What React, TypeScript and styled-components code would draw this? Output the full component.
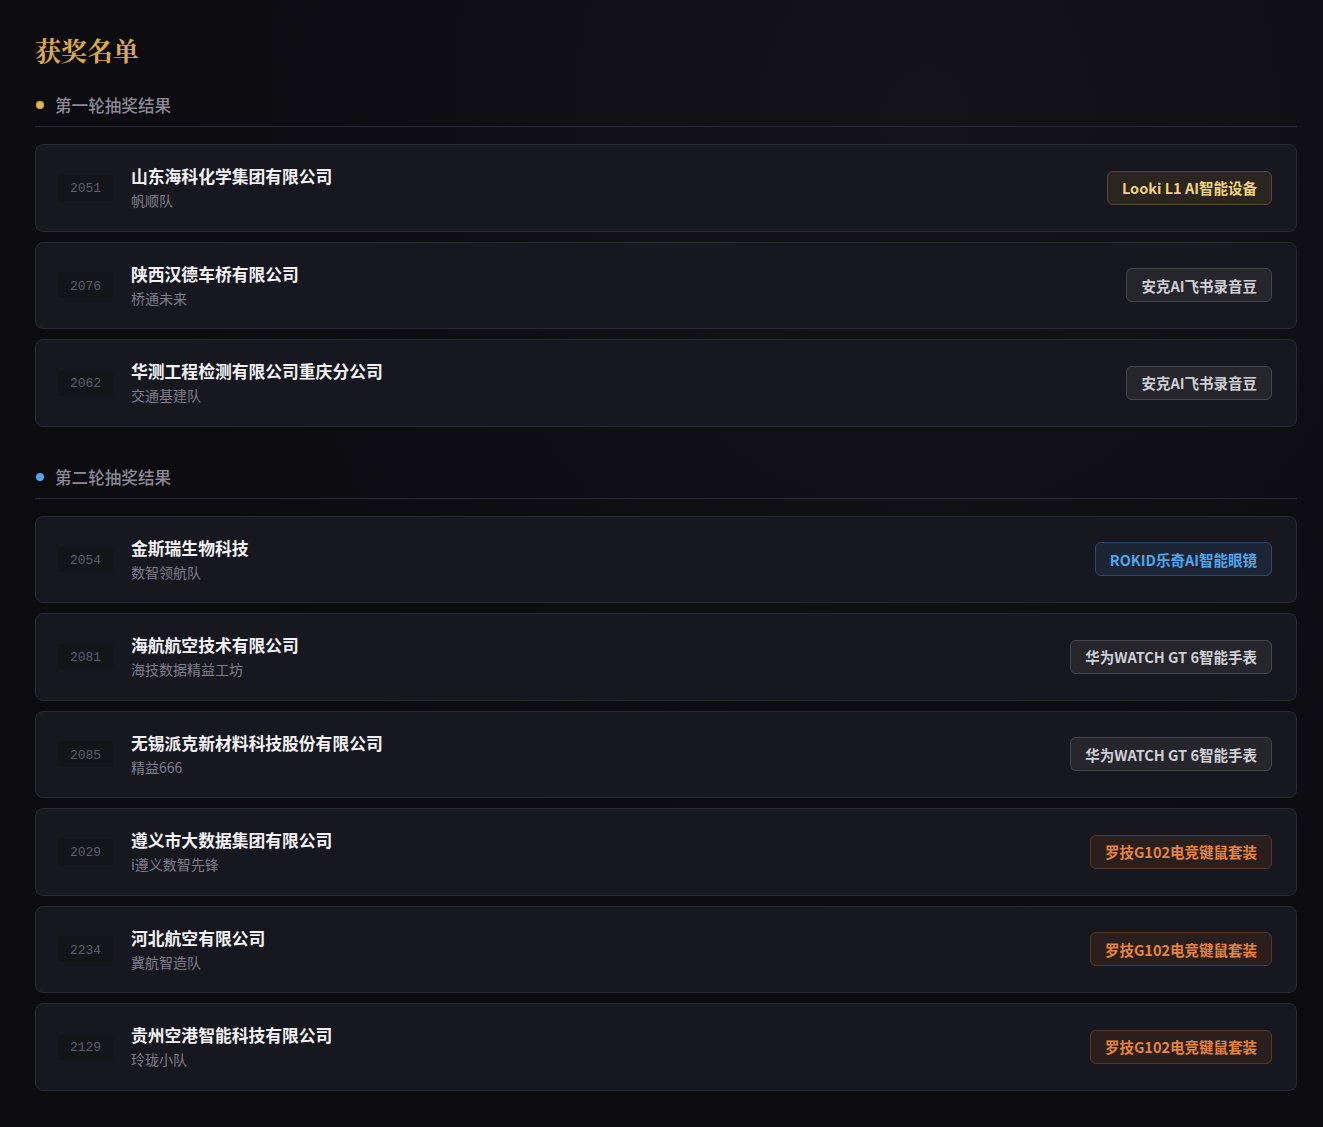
import styled, { createGlobalStyle } from "styled-components";

const GlobalStyle = createGlobalStyle`
  html, body {
    margin: 0;
    padding: 0;
    background: #0c0b10;
  }
  body {
    font-family: "Noto Sans CJK SC", "Noto Sans", sans-serif;
    color: #e8e8ee;
  }
`;

type Tone = "gold" | "grey" | "blue" | "orange";

const tones: Record<Tone, { fg: string; bg: string; border: string }> = {
  gold: { fg: "#f3d27c", bg: "#2b251f", border: "#5b4b31" },
  grey: { fg: "#cfcfd6", bg: "#25252b", border: "#45454d" },
  blue: { fg: "#4ea6ee", bg: "#1b2536", border: "#2e4866" },
  orange: { fg: "#e7843c", bg: "#2a1f1c", border: "#573827" },
};

const Page = styled.div`
  min-height: 1127px;
  box-sizing: border-box;
  padding: 28px 26px 36px 35px;
  background: radial-gradient(ellipse at 70% 10%, #141319 0%, #0c0b10 60%);
`;

const Title = styled.h1`
  margin: 0 0 21px;
  font-family: "Noto Serif CJK SC", "Liberation Serif", serif;
  font-size: 26px;
  font-weight: 700;
  line-height: 44px;
  color: #d9a94c;
`;

const Section = styled.section`
  margin-bottom: 38px;
`;

const SectionHead = styled.div`
  display: flex;
  align-items: center;
  gap: 11px;
  padding: 0 0 9px 0;
  border-bottom: 1px solid #2a2935;
  margin-bottom: 17px;
`;

const Dot = styled.span<{ $color: string }>`
  width: 8px;
  height: 8px;
  border-radius: 50%;
  margin-left: 1px;
  background: ${(p) => p.$color};
`;

const SectionTitle = styled.h2`
  margin: 0;
  font-size: 16.6px;
  font-weight: 500;
  line-height: 24px;
  color: #8b8a96;
`;

const List = styled.div`
  display: flex;
  flex-direction: column;
  gap: 10px;
`;

const Card = styled.div`
  display: flex;
  align-items: center;
  height: 87.5px;
  box-sizing: border-box;
  padding: 0 24px 0 22px;
  background: #17171f;
  border: 1px solid #2a2a35;
  border-radius: 8px;
`;

const Num = styled.div`
  width: 55px;
  height: 26px;
  padding-top: 2px;
  box-sizing: border-box;
  display: flex;
  align-items: center;
  justify-content: center;
  border-radius: 4px;
  background: #14141b;
  color: #5d5d6a;
  font-family: "Liberation Mono", monospace;
  font-size: 13px;
  margin-right: 18px;
`;

const Info = styled.div`
  flex: 1;
  display: flex;
  flex-direction: column;
  gap: 3px;
`;

const Company = styled.div`
  font-size: 16.8px;
  font-weight: 700;
  line-height: 22px;
  color: #f2f2f6;
`;

const Team = styled.div`
  font-size: 14px;
  line-height: 20px;
  color: #7f7e8a;
`;

const Prize = styled.div<{ $tone: Tone }>`
  height: 34px;
  box-sizing: border-box;
  display: flex;
  align-items: center;
  padding: 0 14px;
  border-radius: 6px;
  font-size: 14.5px;
  font-weight: 700;
  color: ${(p) => tones[p.$tone].fg};
  background: ${(p) => tones[p.$tone].bg};
  border: 1px solid ${(p) => tones[p.$tone].border};
`;

type Winner = { no: string; company: string; team: string; prize: string; tone: Tone };

const rounds: { title: string; dot: string; winners: Winner[] }[] = [
  {
    title: "第一轮抽奖结果",
    dot: "#e0b24f",
    winners: [
      { no: "2051", company: "山东海科化学集团有限公司", team: "帆顺队", prize: "Looki L1 AI智能设备", tone: "gold" },
      { no: "2076", company: "陕西汉德车桥有限公司", team: "桥通未来", prize: "安克AI飞书录音豆", tone: "grey" },
      { no: "2062", company: "华测工程检测有限公司重庆分公司", team: "交通基建队", prize: "安克AI飞书录音豆", tone: "grey" },
    ],
  },
  {
    title: "第二轮抽奖结果",
    dot: "#4ea6ee",
    winners: [
      { no: "2054", company: "金斯瑞生物科技", team: "数智领航队", prize: "ROKID乐奇AI智能眼镜", tone: "blue" },
      { no: "2081", company: "海航航空技术有限公司", team: "海技数据精益工坊", prize: "华为WATCH GT 6智能手表", tone: "grey" },
      { no: "2085", company: "无锡派克新材料科技股份有限公司", team: "精益666", prize: "华为WATCH GT 6智能手表", tone: "grey" },
      { no: "2029", company: "遵义市大数据集团有限公司", team: "i遵义数智先锋", prize: "罗技G102电竞键鼠套装", tone: "orange" },
      { no: "2234", company: "河北航空有限公司", team: "冀航智造队", prize: "罗技G102电竞键鼠套装", tone: "orange" },
      { no: "2129", company: "贵州空港智能科技有限公司", team: "玲珑小队", prize: "罗技G102电竞键鼠套装", tone: "orange" },
    ],
  },
];

export default function App() {
  return (
    <Page>
      <GlobalStyle />
      <Title>获奖名单</Title>
      {rounds.map((r) => (
        <Section key={r.title}>
          <SectionHead>
            <Dot $color={r.dot} />
            <SectionTitle>{r.title}</SectionTitle>
          </SectionHead>
          <List>
            {r.winners.map((w) => (
              <Card key={w.no}>
                <Num>{w.no}</Num>
                <Info>
                  <Company>{w.company}</Company>
                  <Team>{w.team}</Team>
                </Info>
                <Prize $tone={w.tone}>{w.prize}</Prize>
              </Card>
            ))}
          </List>
        </Section>
      ))}
    </Page>
  );
}
